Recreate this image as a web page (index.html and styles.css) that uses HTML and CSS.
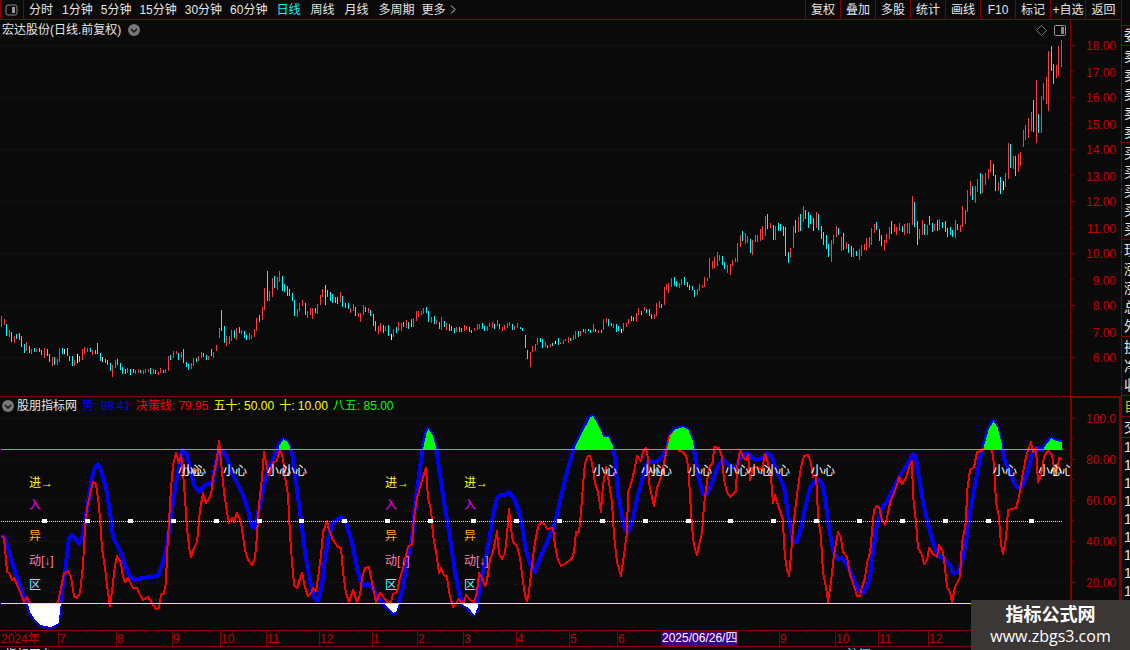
FILE: index.html
```html
<!DOCTYPE html>
<html lang="zh-CN">
<head>
    <meta charset="UTF-8">
    <meta name="viewport" content="width=device-width, initial-scale=1.0">
    <title>宏达股份(日线.前复权)</title>
    <link rel="stylesheet" href="styles.css">
</head>
<body>
    <div class="main">
        <!-- Top toolbar -->
        <div class="toolbar">
            <button class="layout-btn" aria-label="布局">
                <svg width="13" height="12" viewBox="0 0 13 12"><rect x="1" y="1" width="11" height="10" rx="2" fill="none" stroke="#888" stroke-width="1"/><rect x="7" y="3" width="3" height="6" fill="#999"/></svg>
            </button>
            <div class="periods">
                <button class="zh">分时</button>
                <button>1分钟</button>
                <button>5分钟</button>
                <button>15分钟</button>
                <button>30分钟</button>
                <button>60分钟</button>
                <button class="zh active">日线</button>
                <button class="zh">周线</button>
                <button class="zh">月线</button>
                <button class="zh">多周期</button>
                <button class="more">更多<svg width="6" height="9" viewBox="0 0 6 9"><path d="M1 0.5L5 4.5L1 8.5" fill="none" stroke="#ddd"/></svg></button>
            </div>
            <div class="tools">
                <button>复权</button>
                <button>叠加</button>
                <button>多股</button>
                <button>统计</button>
                <button>画线</button>
                <button>F10</button>
                <button>标记</button>
                <button>+自选</button>
                <button>返回</button>
            </div>
        </div>

        <!-- Daily price chart -->
        <div class="price-panel">
            <div class="panel-head">
                <span class="stock-name">宏达股份(日线.前复权)</span>
                <button class="fold" aria-label="展开">
                    <svg width="12" height="12" viewBox="0 0 12 12"><circle cx="6" cy="6" r="6" fill="#777"/><path d="M3 5L6 8L9 5" fill="none" stroke="#111" stroke-width="1.5"/></svg>
                </button>
                <div class="head-icons">
                    <svg width="11" height="11" viewBox="0 0 11 11"><path d="M5.5 0.5L10.5 5.5L5.5 10.5L0.5 5.5Z" fill="none" stroke="#777"/></svg>
                    <svg width="12" height="11" viewBox="0 0 12 11"><rect x="0.5" y="0.5" width="11" height="10" rx="1" fill="none" stroke="#999"/><rect x="7" y="2" width="3" height="7" fill="#888"/></svg>
                </div>
                <div class="axis-gap"></div>
            </div>
            <svg id="price-chart" width="1121" height="356" viewBox="0 40 1121 356"></svg>
        </div>

        <!-- Indicator chart -->
        <div class="indicator-panel">
            <div class="panel-head">
                <button class="fold" aria-label="展开">
                    <svg width="12" height="12" viewBox="0 0 12 12"><circle cx="6" cy="6" r="6" fill="#777"/><path d="M3 5L6 8L9 5" fill="none" stroke="#111" stroke-width="1.5"/></svg>
                </button>
                <span>股朋指标网</span>
                <span class="trend">势: 88.41</span>
                <span class="decision">决策线: 79.95</span>
                <span class="low">五十: 50.00</span>
                <span class="low">十: 10.00</span>
                <span class="high">八五: 85.00</span>
                <div class="axis-gap"></div>
            </div>
            <svg id="indicator-chart" width="1121" height="216" viewBox="0 414 1121 216"></svg>
        </div>

        <svg id="date-axis" width="1121" height="17" viewBox="0 630 1121 17"></svg>
        <div class="ticker"><span>指标平台</span><span class="cyan">沪深</span></div>
    </div>

    <!-- Quote column, cut by the window edge -->
    <div class="quote">
        <div class="group first"><span>委</span></div>
        <div class="group"><span>卖</span><span>卖</span><span>卖</span><span>卖</span><span>卖</span></div>
        <div class="group"><span>买</span><span>买</span><span>买</span><span>买</span><span>买</span></div>
        <div class="group"><span>现</span><span>涨</span><span>涨</span><span>总</span><span>外</span></div>
        <div class="group"><span>换</span><span>净</span><span>收</span></div>
        <div class="group yellow"><span>自</span></div>
        <div class="group"><span>交</span></div>
        <div class="trades"><span>1</span><span>1</span><span>1</span><span>1</span><span>1</span><span>1</span><span>1</span><span>1</span><span>1</span></div>
    </div>

    <div class="site-badge">
        <strong>指标公式网</strong>
        <span>www.zbgs3.com</span>
    </div>

    <script src="script.js"></script>
</body>
</html>
```

FILE: styles.css
```css
body {
    margin: 0;
    height: 100vh;
    display: flex;
    overflow: hidden;
    background-color: #0a0a0a;
    color: #e6e6e6;
    font-family: 'Liberation Sans', 'Noto Sans CJK SC', sans-serif;
    font-size: 12px;
    line-height: 16px;
}

button {
    margin: 0;
    padding: 0;
    border: none;
    background: none;
    color: inherit;
    font: inherit;
    white-space: nowrap;
    cursor: pointer;
}

svg {
    display: block;
    flex: none;
}

.main {
    flex: 1;
    min-width: 0;
    overflow: hidden;
}

/* Toolbar */
.toolbar {
    display: flex;
    height: 19px;
    border-bottom: 1px solid #800000;
}

.layout-btn {
    width: 24px;
    box-sizing: border-box;
    padding-left: 4px;
    border-left: 1px solid #800000;
    border-right: 1px solid #800000;
}

.periods {
    flex: 1;
    display: flex;
    min-width: 0;
    overflow: hidden;
}

.periods button {
    padding: 0 4px;
}

.periods .zh {
    padding: 0 5px;
}

.periods .more {
    display: flex;
    align-items: center;
    gap: 4px;
    padding: 0 2px;
}

.periods .active {
    color: #00ffff;
}

.tools {
    display: flex;
}

.tools button {
    width: 35px;
    box-sizing: border-box;
    border-left: 1px solid #800000;
}

.tools button:last-child {
    width: 36px;
}

/* Chart panels */
.panel-head {
    display: flex;
    align-items: center;
    white-space: nowrap;
}

.price-panel .panel-head {
    height: 20px;
    padding-left: 2px;
    gap: 7px;
}

.head-icons {
    display: flex;
    gap: 7px;
    margin-left: auto;
}

.axis-gap {
    width: 50px;
    align-self: stretch;
    border-left: 1px solid #800000;
}

.price-panel .axis-gap {
    margin-left: -3px;
}

.indicator-panel {
    border-top: 1px solid #800000;
}

.indicator-panel .panel-head {
    height: 17px;
    padding-left: 2px;
    gap: 5px;
}

.indicator-panel .fold {
    margin-right: -2px;
}

.indicator-panel .axis-gap {
    width: 47px;
    margin-left: auto;
    border: 2px solid #800000;
    border-top-width: 1px;
    border-bottom: none;
}

.trend {
    color: #0000ff;
}

.decision {
    color: #ff0000;
}

.low {
    color: #ffff00;
}

.high {
    color: #00ff00;
}

#price-chart,
#indicator-chart,
#date-axis {
    shape-rendering: crispEdges;
}

.grid {
    stroke: #5a1414;
    stroke-dasharray: 1 3;
}

.axis-text {
    fill: #c80000;
}

/* Bottom ticker, only its top edge is in view */
.ticker {
    display: flex;
    justify-content: space-between;
    padding: 0 250px 0 5px;
}

.cyan {
    color: #00ffff;
}

/* Quote column */
.quote {
    width: 8px;
    flex: none;
    overflow: hidden;
    border-left: 1px solid #800000;
    font-size: 14px;
}

.group {
    padding-top: 1px;
    border-bottom: 1px solid #800000;
}

.group span,
.trades span {
    display: block;
    width: 14px;
    padding-left: 2px;
    line-height: 19px;
}

.first {
    margin-top: 25px;
    padding-top: 0;
    border-top: 1px solid #800000;
}

.yellow {
    color: #d0c800;
}

.trades span {
    line-height: 18px;
}

/* Site badge */
.site-badge {
    position: absolute;
    right: 0;
    bottom: 0;
    width: 159px;
    height: 50px;
    padding-top: 4px;
    box-sizing: border-box;
    background-color: #3c3737;
    color: #ffffff;
    text-align: center;
}

.site-badge strong,
.site-badge span {
    display: block;
}

.site-badge strong {
    font-size: 18px;
    line-height: 22px;
}

.site-badge span {
    font-family: 'Open Sans', sans-serif;
    font-size: 16px;
    line-height: 20px;
}
```

FILE: script.js
```javascript
const NS = 'http://www.w3.org/2000/svg';

// Daily bars: x, high, low for each colour
const upBars = '1,316,327 4,319,325 9,330,337 14,336,343 26,342,351 31,349,354 36,349,352 44,348,358 52,357,366 57,359,365 59,348,362 74,360,366 82,349,360 84,347,354 87,348,352 92,350,355 112,365,377 115,360,368 127,368,373 135,370,374 138,369,373 143,370,374 145,369,373 148,369,372 153,369,374 158,372,375 160,368,373 165,369,373 168,356,371 173,351,358 176,351,354 181,352,358 191,363,369 193,358,366 198,356,361 201,352,358 208,356,360 213,352,358 216,345,351 219,328,338 226,336,346 229,336,344 231,330,341 236,328,340 241,330,334 249,333,340 251,335,339 254,329,337 256,318,331 262,307,320 264,288,310 269,291,301 272,278,297 277,277,290 279,271,282 297,309,317 299,303,311 302,300,306 307,311,318 310,308,315 312,308,319 317,304,314 320,295,305 322,289,297 340,292,302 350,308,313 353,304,311 358,313,317 360,313,322 363,305,315 368,308,313 378,326,334 '
    + '380,323,332 385,326,331 393,329,337 398,322,331 401,323,331 406,320,328 413,318,327 416,311,321 418,311,317 421,311,315 423,308,314 431,317,323 436,320,324 441,317,330 446,323,330 456,327,332 464,325,331 466,326,330 474,328,331 477,324,330 479,324,329 487,326,331 489,323,327 492,322,328 497,320,326 502,327,331 504,325,330 507,323,328 509,322,326 514,326,330 517,323,328 530,352,367 532,346,352 535,344,351 537,338,345 545,342,347 550,344,347 560,342,344 563,340,344 565,339,341 568,337,343 573,335,340 575,331,339 580,331,336 585,329,333 593,324,332 598,330,333 603,319,330 606,318,323 613,324,328 623,323,331 626,323,327 628,319,324 636,313,322 638,308,315 644,307,311 654,314,319 656,303,316 659,301,308 664,287,305 666,284,290 668,283,293 671,278,287 679,283,288 681,279,285 697,289,295 699,284,291 702,285,288 704,277,287 707,278,281 709,258,278 712,261,269 714,257,268 717,252,266 719,255,261 727,265,273 730,264,275 732,260,266 735,258,262 737,243,262 740,235,247 745,233,244 747,236,243 752,240,255 755,235,242 757,235,242 760,229,241 762,226,240 765,216,236 770,223,228 775,226,240 790,248,258 793,226,248 798,217,232 803,206,222 816,212,228 831,240,262 833,235,244 836,226,237 841,237,251 846,242,249 853,248,257 859,249,260 861,245,256 864,244,250 866,238,251 869,237,247 871,228,245 874,224,233 884,240,251 886,234,243 889,227,239 894,224,232 896,227,235 899,223,231 904,224,235 907,223,233 909,223,234 912,196,225 919,229,239 922,220,235 927,225,235 934,224,231 939,219,230 955,220,238 960,225,232 962,206,227 965,210,224 967,190,212 970,181,196 975,186,203 977,179,192 982,174,193 985,173,185 988,169,179 990,160,172 998,182,191 1005,173,187 1008,143,179 1013,156,169 1018,154,172 1020,152,166 1023,130,147 1025,125,140 1028,118,138 1031,112,131 1036,80,143 1041,96,133 1043,83,100 1046,77,104 1048,51,111 1056,65,78 1058,46,76 1061,40,67';
const downBars = '6,324,336 11,332,342 16,334,339 19,333,340 21,336,347 24,344,353 29,346,353 34,348,352 39,348,352 41,350,355 47,349,356 49,354,362 54,357,365 62,348,354 67,348,356 69,356,361 72,356,366 79,356,362 90,348,352 95,350,354 97,343,354 100,353,361 105,359,363 107,360,365 110,363,371 117,359,365 120,363,370 122,367,374 125,369,374 130,369,375 133,369,373 140,370,373 150,368,374 155,370,374 163,370,373 170,355,360 178,353,360 183,349,363 186,362,367 188,364,370 196,358,362 203,353,357 206,355,360 211,349,356 221,310,331 224,326,343 234,330,338 239,327,333 244,331,338 246,335,340 259,315,322 267,271,301 274,276,288 282,276,291 284,284,292 287,286,296 289,289,296 292,293,301 294,300,316 305,303,315 315,308,313 325,285,305 327,290,297 330,292,301 332,294,303 335,297,303 337,297,304 342,296,307 345,303,308 348,303,309 355,307,316 365,307,312 370,310,316 373,314,326 375,321,331 '
    + '383,325,333 388,325,336 396,327,333 403,322,327 408,322,329 411,319,327 426,307,313 428,311,322 434,316,324 439,322,329 444,321,327 449,324,331 451,326,331 454,328,333 459,327,332 461,328,332 469,327,332 471,330,333 482,323,329 484,326,331 494,324,329 499,324,329 512,324,330 520,327,329 522,328,331 525,335,348 527,350,359 540,338,342 542,339,348 547,345,348 552,343,346 558,338,345 570,338,341 578,331,337 583,329,332 588,329,331 590,330,333 595,329,332 601,330,333 608,319,326 611,323,326 616,324,332 618,326,331 631,316,321 633,317,321 641,311,315 646,309,313 649,309,316 651,314,319 661,304,308 674,277,286 676,281,287 684,277,285 687,282,287 689,285,290 692,286,290 694,290,297 722,256,265 724,262,269 742,231,241 750,239,253 767,214,229 773,225,240 778,223,231 780,224,231 783,226,236 785,227,256 788,252,263 795,220,233 800,214,231 805,210,219 808,212,228 810,215,224 813,218,231 818,214,230 821,226,239 823,232,245 826,235,249 828,244,257 838,228,235 843,233,250 848,244,253 851,246,257 856,251,256 876,222,230 879,229,241 881,235,246 891,221,234 902,226,232 914,202,227 917,221,245 924,224,235 929,216,225 932,223,232 937,220,231 942,222,228 945,221,232 947,228,237 950,227,235 952,230,237 957,224,230 972,186,200 980,173,194 993,164,176 995,175,191 1000,177,194 1010,144,168 1015,156,176 1033,100,132 1038,114,133 1051,46,71 1053,64,84';
const flatBars = '64,349,354 77,354,363 102,357,362 391,334,340 555,341,344 621,329,333 1003,181,190';

const trend = '2,535 4,537 7,545 12,562 17,577 22,592 27,603 30,613 35,620 40,625 50,627 58,623 61,598 65,572 69,538 72,535 75,538 79,544 83,535 86,515 92,478 95,467 98,464 101,470 106,488 110,512 113,537 117,545 121,553 125,565 130,577 135,580 142,578 158,576 162,565 165,555 168,537 173,502 177,478 180,460 183,450 187,455 190,468 194,485 199,492 205,485 212,483 215,468 218,453 223,451 227,458 232,473 237,483 243,495 248,510 252,527 255,528 258,512 262,495 265,482 270,465 275,455 279,445 283,439 287,442 292,452 295,475 300,512 305,552 310,582 315,599 318,601 322,585 325,558 329,535 333,523 341,517 346,523 352,543 357,568 362,586 368,584 373,588 377,598 383,603 388,608 393,613 396,611 399,602 403,587 407,562 412,538 415,505 419,475 423,447 426,433 428,429 432,435 436,448 440,475 445,508 450,538 455,572 459,592 463,605 468,608 474,615 477,608 480,585 485,562 490,535 493,515 497,498 500,495 505,495 509,492 515,500 520,515 523,532 527,555 532,568 535,572 540,558 547,542 553,528 557,515 562,492 567,472 572,455 574,448 582,432 590,417 592,416 595,420 600,430 603,437 608,437 612,445 615,458 618,495 622,515 625,530 628,532 632,522 638,495 643,477 647,463 651,462 657,462 663,455 667,447 670,435 675,429 683,427 688,430 692,440 695,455 698,475 703,494 707,494 712,483 717,468 723,459 730,466 735,468 740,458 747,453 755,460 762,458 767,453 772,457 776,470 782,482 785,492 788,515 793,542 797,542 801,528 805,508 810,488 817,479 822,483 825,498 829,528 833,550 837,559 842,558 847,565 853,578 859,591 863,593 867,587 870,577 873,552 877,525 882,508 888,500 900,475 908,463 913,454 916,458 919,478 923,502 928,525 933,542 938,555 945,560 950,565 953,573 958,572 962,562 966,542 970,512 975,485 980,458 983,448 988,430 993,421 997,427 1001,443 1004,458 1010,473 1015,485 1019,488 1023,485 1028,470 1033,452 1037,448 1042,450 1047,443 1051,438 1055,441 1062,442';
const decision = '2,536 4,538 7,572 9,573 12,580 14,578 18,587 24,602 27,597 29,602 33,606 55,606 58,602 61,588 64,573 68,571 71,577 74,596 77,598 80,593 83,565 85,528 87,508 91,490 93,482 96,484 98,498 100,518 102,548 105,568 108,593 110,606 112,592 115,565 117,556 121,563 123,577 125,582 128,578 133,588 137,588 140,595 143,600 148,597 152,603 156,609 159,608 161,595 164,593 166,582 167,555 169,522 171,488 173,465 176,453 179,463 181,455 183,472 185,498 187,528 189,547 191,557 194,548 197,542 200,510 203,493 206,503 211,495 213,478 217,458 219,441 221,462 224,492 227,512 229,523 232,518 234,522 237,513 241,522 245,550 248,560 252,565 255,558 257,535 259,505 262,478 264,452 267,468 269,475 273,463 277,460 280,450 283,458 285,477 288,495 290,535 292,562 294,585 297,588 302,573 305,587 308,596 311,593 313,588 316,591 318,578 321,555 323,532 327,521 329,530 333,540 338,547 341,548 343,572 346,593 349,602 353,590 357,602 360,595 362,578 365,568 369,567 371,577 374,593 376,602 380,593 386,600 388,603 391,602 393,594 397,592 399,582 403,568 408,547 412,544 414,518 417,498 423,477 426,468 428,498 431,510 433,535 437,558 439,573 441,568 444,575 447,577 449,592 453,607 456,603 459,599 461,603 464,602 466,595 470,600 474,602 477,592 479,573 482,578 485,586 487,580 490,560 493,552 495,542 497,531 499,554 502,559 505,553 507,535 509,509 511,528 513,542 517,546 520,558 523,582 525,595 527,601 529,592 532,565 535,542 538,527 541,522 545,525 547,529 553,528 555,545 558,560 561,566 565,564 572,558 574,552 576,532 579,532 581,512 583,485 585,463 588,456 590,456 592,463 595,483 598,492 601,512 603,485 606,467 609,483 612,502 614,535 617,562 621,576 623,562 627,532 628,493 632,480 635,467 637,456 641,461 643,452 646,448 648,458 649,482 652,498 654,506 657,488 661,477 664,463 667,448 669,437 673,433 679,451 683,452 687,458 689,478 691,512 693,538 695,550 697,555 699,545 702,533 704,505 707,482 709,468 713,462 714,447 719,448 722,457 724,480 727,492 730,497 736,491 737,468 740,450 743,457 746,460 748,455 750,480 753,468 757,467 762,470 765,454 768,463 771,478 773,503 775,495 778,505 783,520 784,545 786,565 789,576 791,555 793,528 797,495 801,467 804,456 808,455 811,463 813,477 816,475 818,515 821,538 823,573 826,587 828,602 831,582 834,555 838,532 841,538 843,552 847,557 850,575 853,583 857,596 860,596 862,587 865,578 867,563 870,553 872,532 874,510 877,506 879,507 882,520 885,525 887,518 890,503 893,495 897,485 899,477 902,484 906,478 909,467 912,461 913,495 916,522 918,548 922,555 924,564 927,560 929,548 933,554 937,557 939,545 943,552 945,568 947,587 950,592 952,602 955,587 960,577 962,543 966,522 967,492 970,470 974,467 977,452 979,452 985,448 992,450 994,465 996,502 999,518 1001,545 1003,554 1006,538 1008,510 1012,509 1016,508 1019,497 1022,478 1026,457 1028,450 1031,442 1033,452 1036,448 1038,482 1041,475 1044,457 1048,450 1052,455 1054,468 1057,473 1059,458 1062,459';

function add(parent, tag, attrs, text) {
    const el = document.createElementNS(NS, tag);
    for (const key in attrs) el.setAttribute(key, attrs[key]);
    if (text) el.textContent = text;
    parent.appendChild(el);
    return el;
}

function drawBars(svg, data, color) {
    const d = data.split(' ').map(bar => {
        const [x, high, low] = bar.split(',');
        return `M${x} ${high}h1V${low}h-1z`;
    }).join('');
    add(svg, 'path', { d, fill: color });
}

function block(svg, x, y, width, height, fill) {
    add(svg, 'rect', { x, y, width, height, fill });
}

// Price chart
const price = document.getElementById('price-chart');
for (let i = 0; i < 13; i++) {
    const y = 45 + i * 26;
    const major = i % 2 === 0;
    if (major) add(price, 'path', { d: `M1 ${y + 0.5}H1067`, class: 'grid' });
    block(price, 1071, y, major ? 5 : 2, 1, '#800000');
    add(price, 'text', { x: 1116, y: y + (major ? 5 : 6), 'text-anchor': 'end', class: 'axis-text' }, (18 - i) + '.00');
}
block(price, 1070, 40, 1, 356, '#800000');
drawBars(price, upBars, '#ff3c3c');
drawBars(price, downBars, '#00ffff');
drawBars(price, flatBars, '#ffffff');

// Indicator chart
const chart = document.getElementById('indicator-chart');
['100.0', '80.00', '60.00', '40.00', '20.00'].forEach((label, i) => {
    const y = 418 + i * 41;
    add(chart, 'path', { d: `M1 ${y + 0.5}H1067`, class: 'grid' });
    block(chart, 1072, y, 4, 1, '#800000');
    block(chart, 1072, y + 20, 2, 1, '#800000');
    add(chart, 'text', { x: 1116, y: y + 5, 'text-anchor': 'end', class: 'axis-text' }, label);
});

add(chart, 'polyline', { points: trend, fill: 'none', stroke: '#0000ff', 'stroke-width': 4, 'stroke-linejoin': 'round' });
add(chart, 'polyline', { points: decision, fill: 'none', stroke: '#ff0000', 'stroke-width': 2, 'stroke-linejoin': 'round' });

// Fill the areas where the trend is above 85 or below 10
const points = trend.split(' ').map(p => p.split(',').map(Number));
for (let i = 1; i < points.length; i++) {
    const [x1, y1] = points[i - 1];
    const [x2, y2] = points[i];
    for (let x = x1; x < x2; x++) {
        const y = Math.round(y1 + (y2 - y1) * (x - x1) / (x2 - x1));
        if (y < 448) block(chart, x, y, 1, 450 - y, '#00ff00');
        if (y > 604) block(chart, x, 603, 1, y - 603, '#ffffff');
    }
}

block(chart, 1, 449, 1062, 1, '#00ff00');
block(chart, 1, 603, 1062, 1, '#ffff00');
add(chart, 'path', { d: 'M1 521.5H1062', stroke: '#ffff00', 'stroke-dasharray': '1 1' });
for (let i = 0; i < 24; i++) block(chart, Math.round(42 + i * 42.9), 519, 5, 4, '#ffffff');

[178, 182, 223, 267, 283, 593, 641, 648, 688, 725, 748, 766, 811, 993, 1038, 1050].forEach(x => {
    add(chart, 'text', { x, y: 475, fill: '#ffffff' }, '小心');
});
block(chart, 1072, 464, 4, 14, '#0a0a0a');
block(chart, 1070, 414, 2, 216, '#800000');
block(chart, 1119, 414, 2, 216, '#800000');

const signals = [['进→', 487, '#ffff00'], ['入', 509, '#ff00ff'], ['异', 540, '#ffb400'], ['动[↓]', 565, '#ff80b0'], ['区', 589, '#60ffff']];
[29, 385, 464].forEach(x => {
    signals.forEach(([label, y, fill]) => add(chart, 'text', { x, y, fill }, label));
});

// Date axis
const dates = document.getElementById('date-axis');
block(dates, 0, 630, 1121, 1, '#800000');
block(dates, 0, 646, 1121, 1, '#800000');
const months = [[0, '2024年'], [58, '7'], [116, '8'], [172, '9'], [220, '10'], [266, '11'], [319, '12'], [372, '1'], [417, '2'], [463, '3'], [516, '4'], [569, '5'], [617, '6'], [661, ''], [720, ''], [779, '9'], [835, '10'], [878, '11'], [928, '12']];
months.forEach(([x, label], i) => {
    const next = i + 1 < months.length ? months[i + 1][0] : 980;
    if (x > 0) block(dates, x, 630, 1, 16, '#800000');
    for (let k = 1; k < 4; k++) block(dates, Math.round(x + (next - x) * k / 4), 631, 1, 2, '#800000');
    if (label) add(dates, 'text', { x: x + 1, y: 643, class: 'axis-text' }, label);
});
block(dates, 661, 631, 77, 15, '#400080');
add(dates, 'text', { x: 662, y: 642, fill: '#ffffff' }, '2025/06/26/四');
```
